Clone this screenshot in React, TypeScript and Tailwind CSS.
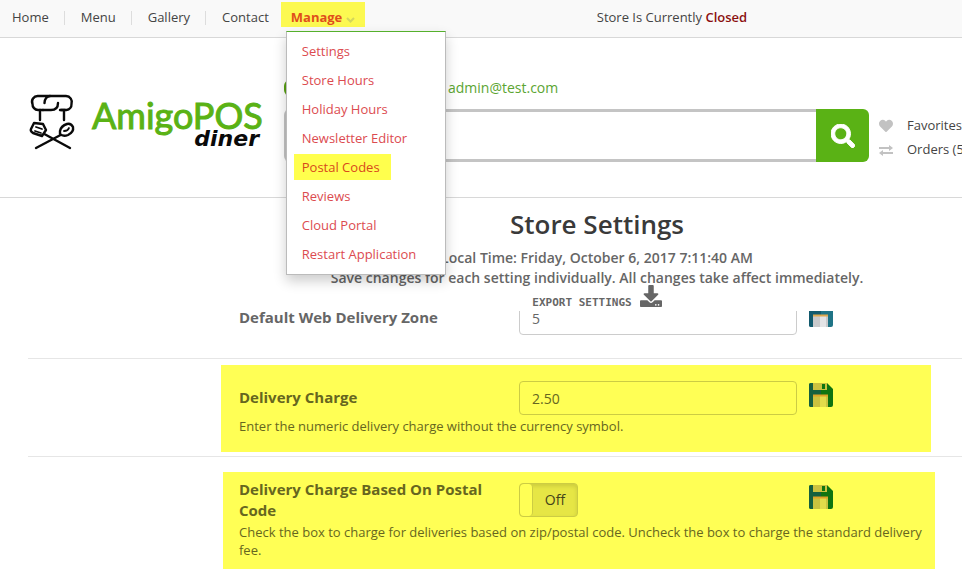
import React from "react";
import { FaHeart, FaSearch, FaDownload } from "react-icons/fa";

const navLinks = ["Home", "Menu", "Gallery", "Contact"];

const manageLinks = [
  "Settings",
  "Store Hours",
  "Holiday Hours",
  "Newsletter Editor",
  "Postal Codes",
  "Reviews",
  "Cloud Portal",
  "Restart Application",
];

function ManageMenu() {
  return (
    <ul className="absolute left-[5px] top-[29px] z-20 w-40 border border-[#bbb] border-t-[#55b02c] bg-white pb-[6px] pt-1 shadow-[0_6px_12px_rgba(0,0,0,0.2)]">
      {manageLinks.map((name) => (
        <li key={name} className="flex h-[29px] items-center px-[7px]">
          <a
            href="#"
            className={
              name === "Postal Codes"
                ? "bg-[#ffff4d] py-[3px] pl-2 pr-[11px] leading-5 text-[#d8491c]"
                : "px-2 leading-5 text-[#dc4b50]"
            }
          >
            {name}
          </a>
        </li>
      ))}
    </ul>
  );
}

function TopBar() {
  return (
    <nav className="relative flex h-[38px] border-b border-[#d8d8d8] bg-[#f9f9f9] pt-[2px] text-[13px] text-[#444]">
      <ul className="flex h-[31px] items-center">
        {navLinks.map((name, i) => (
          <li key={name} className={i === 0 ? "pl-3" : "ml-[15px] flex items-center"}>
            {i > 0 && <span className="mr-4 h-[14px] w-px bg-[#ddd]" />}
            <a href="#">{name}</a>
          </li>
        ))}
      </ul>
      <div className="relative ml-3 h-[25px] w-[84px] bg-[#fcf951]">
        <button className="flex h-[31px] items-center pl-[10px] font-bold text-[#e04e1b]">
          Manage
          <svg className="ml-1 mt-1" width="9" height="6" viewBox="0 0 9 6" fill="none" stroke="#d3d65c" strokeWidth="2">
            <path d="M1 1l3.500 3.500L8 1" />
          </svg>
        </button>
        <ManageMenu />
      </div>
      <p className="ml-[232px] h-[31px] leading-[31px] text-[#444]">
        Store Is Currently <span className="font-semibold text-[#8b1010]">Closed</span>
      </p>
    </nav>
  );
}

function Logo() {
  return (
    <svg width="240" height="68" viewBox="0 0 240 68" role="img" aria-label="AmigoPOS diner" className="shrink-0">
      <g fill="none" stroke="#0a0a0a" strokeWidth="2.400" strokeLinecap="round" strokeLinejoin="round">
        <path d="M15 22H10a5.700 5.700 0 0 1-5.500-6 5.700 5.700 0 0 1 5.500-8H38a6 6 0 0 1 5.500 8 5.700 5.700 0 0 1-5 6H33" />
        <path d="M22 8c-3 0-5.500 3-5.500 7M30 15c0 5-3 7-7 7H15M12 22v10M36 22v10M32 22h5" />
        <path d="M8 60L42 42M42 60L9 42" />
        <path d="M6 35l9 1 3 6-4 6-9-3q-3-2-2-4z" fill="#fff" />
        <path d="M8 39l6 2M7 43l6 2" strokeWidth="1.800" />
        <path d="M32 43q1-5 7-7 4-1 6 3 1 5-5 8-5 2-8-1z" fill="#fff" />
        <path d="M36 43q4 0 5-3" strokeWidth="1.800" />
      </g>
      <text
        x="64"
        y="41"
        fill="#5ab215"
        stroke="#5ab215"
        strokeWidth="1"
        fontSize="36"
        className="font-['Lato',sans-serif]"
      >
        AmigoPOS
      </text>
      <text x="231" y="58" textAnchor="end" fill="#0a0a0a" fontSize="22" fontWeight="700" fontStyle="italic" className="font-['DejaVu_Sans',sans-serif]">
        diner
      </text>
    </svg>
  );
}

function Header() {
  return (
    <header className="flex h-[160px] border-b border-[#d8d8d8] pl-7">
      <div className="w-64 shrink-0 pt-[50px]">
        <Logo />
      </div>
      <div className="min-w-0 flex-1 pt-10">
        <div className="flex h-5 items-center text-sm text-[#5ba532]">
          <span className="h-4 w-4 rounded-md bg-[#58a012]" />
          <a href="#" className="ml-[148px]">admin@test.com</a>
        </div>
        <form className="mt-[11px] flex h-[53px]">
          <input
            type="text"
            aria-label="Search"
            className="min-w-0 flex-1 rounded-l-md border-y-[3px] border-l-[3px] border-[#c4c4c4] bg-white px-3 outline-none"
          />
          <button type="button" aria-label="Search" className="flex w-[53px] items-center justify-center rounded-r-md bg-[#5ab215] text-white">
            <FaSearch size={24} stroke="currentColor" strokeWidth={20} />
          </button>
        </form>
      </div>
      <ul className="ml-[10px] w-[83px] shrink-0 pt-[76px] text-[13px] text-[#444]">
        <li className="flex h-6 items-center whitespace-nowrap">
          <FaHeart size={14} className="mr-[14px] shrink-0 text-[#c2c2c2]" />
          <a href="#">Favorites</a>
        </li>
        <li className="flex h-6 items-center whitespace-nowrap">
          <svg className="mr-[14px] shrink-0" width="14" height="11" viewBox="0 0 14 11" fill="#c2c2c2">
            <path d="M0 2h10V0l4 3-4 3V4H0zM14 7H4V5L0 8l4 3V9h10z" />
          </svg>
          <a href="#">Orders (5</a>
        </li>
      </ul>
    </header>
  );
}

type DiskColors = { body: string; side: string; label: string; light: string; trim: string };

const blueDisk: DiskColors = { body: "#1f7486", side: "#125a6d", label: "#c9c9cb", light: "#e4e4e6", trim: "#e0a94e" };
const greenDisk: DiskColors = { body: "#0f7410", side: "#16603f", label: "#cbc23f", light: "#e2dc4a", trim: "#dda326" };

function SaveButton({ colors, name }: { colors: DiskColors; name: string }) {
  return (
    <button aria-label={`Save ${name}`} className="ml-3 h-6 w-6 shrink-0">
      <svg width="24" height="24" viewBox="0 0 24 24">
        <path d="M2 0H18L24 6V22a2 2 0 0 1-2 2H2a2 2 0 0 1-2-2V2a2 2 0 0 1 2-2z" fill={colors.body} />
        <path d="M2 0H12V24H2a2 2 0 0 1-2-2V2a2 2 0 0 1 2-2z" fill={colors.side} />
        <path d="M4 0H18V7H4z" fill={colors.label} />
        <path d="M13 1h3v5h-3z" fill={colors.body} />
        <path d="M4 12H19V24H4z" fill={colors.label} />
        <path d="M11 12H17V24H11z" fill={colors.light} />
        <path d="M4 11.500H19V13.500H4z" fill={colors.trim} />
      </svg>
    </button>
  );
}

function SettingsHeading() {
  return (
    <div className="pl-[232px] pt-[10px] text-center text-[#666]">
      <h1 className="text-[26px] font-semibold leading-8 text-[#3a3a3a]">Store Settings</h1>
      <p className="mt-2 text-sm font-semibold leading-5">Local Time: Friday, October 6, 2017 7:11:40 AM</p>
      <p className="text-sm font-semibold leading-5">
        Save changes for each setting individually. All changes take affect immediately.
      </p>
      <button className="flex h-5 w-full items-center justify-center font-['DejaVu_Sans_Mono',monospace] text-[11px]">
        <span className="pt-[10px] font-bold">EXPORT SETTINGS</span>
        <FaDownload size={22} className="mb-1 ml-2 shrink-0" />
      </button>
    </div>
  );
}

export default function App() {
  return (
    <div className="flex h-screen flex-col overflow-hidden bg-white font-['Open_Sans',sans-serif]">
      <TopBar />
      <Header />
      <main className="flex min-h-0 flex-1 flex-col">
        <SettingsHeading />
        <div className="mt-[3px] min-h-0 flex-1 overflow-hidden pl-7">
          <section className="-mt-[10px] flex h-[58px] items-start border-b border-[#e6e6e6] pl-[211px] text-[#666]">
            <label htmlFor="zone" className="w-[280px] pt-[6px] text-[15px] font-bold leading-[21px]">
              Default Web Delivery Zone
            </label>
            <input
              id="zone"
              defaultValue="5"
              className="h-[34px] w-[278px] rounded border border-[#ccc] bg-white px-3 text-sm text-[#666]"
            />
            <div className="flex pt-[2px]">
              <SaveButton colors={blueDisk} name="zone" />
            </div>
          </section>

          <section className="border-b border-[#e6e6e6] pb-1 pt-[6px]">
            <div className="ml-[193px] mr-[31px] h-[87px] bg-[#ffff55] pl-[18px] pt-4 text-[#66661f]">
              <div className="flex items-start">
                <label htmlFor="charge" className="w-[280px] pt-[6px] text-[15px] font-bold leading-[21px]">
                  Delivery Charge
                </label>
                <input
                  id="charge"
                  defaultValue="2.50"
                  className="h-[34px] w-[278px] rounded border border-[#cccc44] bg-transparent px-3 text-sm"
                />
                <div className="flex pt-[2px]">
                  <SaveButton colors={greenDisk} name="delivery charge" />
                </div>
              </div>
              <p className="mt-[2px] text-[13px] leading-[18px]">
                Enter the numeric delivery charge without the currency symbol.
              </p>
            </div>
          </section>

          <section className="pt-[15px]">
            <div className="ml-[195px] mr-[27px] h-[98px] bg-[#ffff55] pl-4 pt-[7px] text-[#66661f]">
              <div className="flex items-start">
                <h2 className="w-[280px] pr-5 text-[15px] font-bold leading-[21px]">
                  Delivery Charge Based On Postal Code
                </h2>
                <div className="w-[278px] pt-1">
                  <label className="flex h-[34px] w-[59px] overflow-hidden rounded border border-[#cccc44] bg-[#e6e645] text-sm text-[#44441a] shadow-[inset_0_2px_4px_rgba(0,0,0,0.12)]">
                    <input type="checkbox" className="w-[13px] shrink-0 appearance-none rounded border-r border-[#cccc44] bg-[#ffff55]" />
                    <span className="flex-1 text-center leading-8">Off</span>
                  </label>
                </div>
                <div className="flex pt-[6px]">
                  <SaveButton colors={greenDisk} name="postal code charge" />
                </div>
              </div>
              <p className="mt-[2px] pr-3 text-[13px] leading-[18px]">
                Check the box to charge for deliveries based on zip/postal code. Uncheck the box to charge the standard
                delivery fee.
              </p>
            </div>
          </section>
        </div>
      </main>
    </div>
  );
}
